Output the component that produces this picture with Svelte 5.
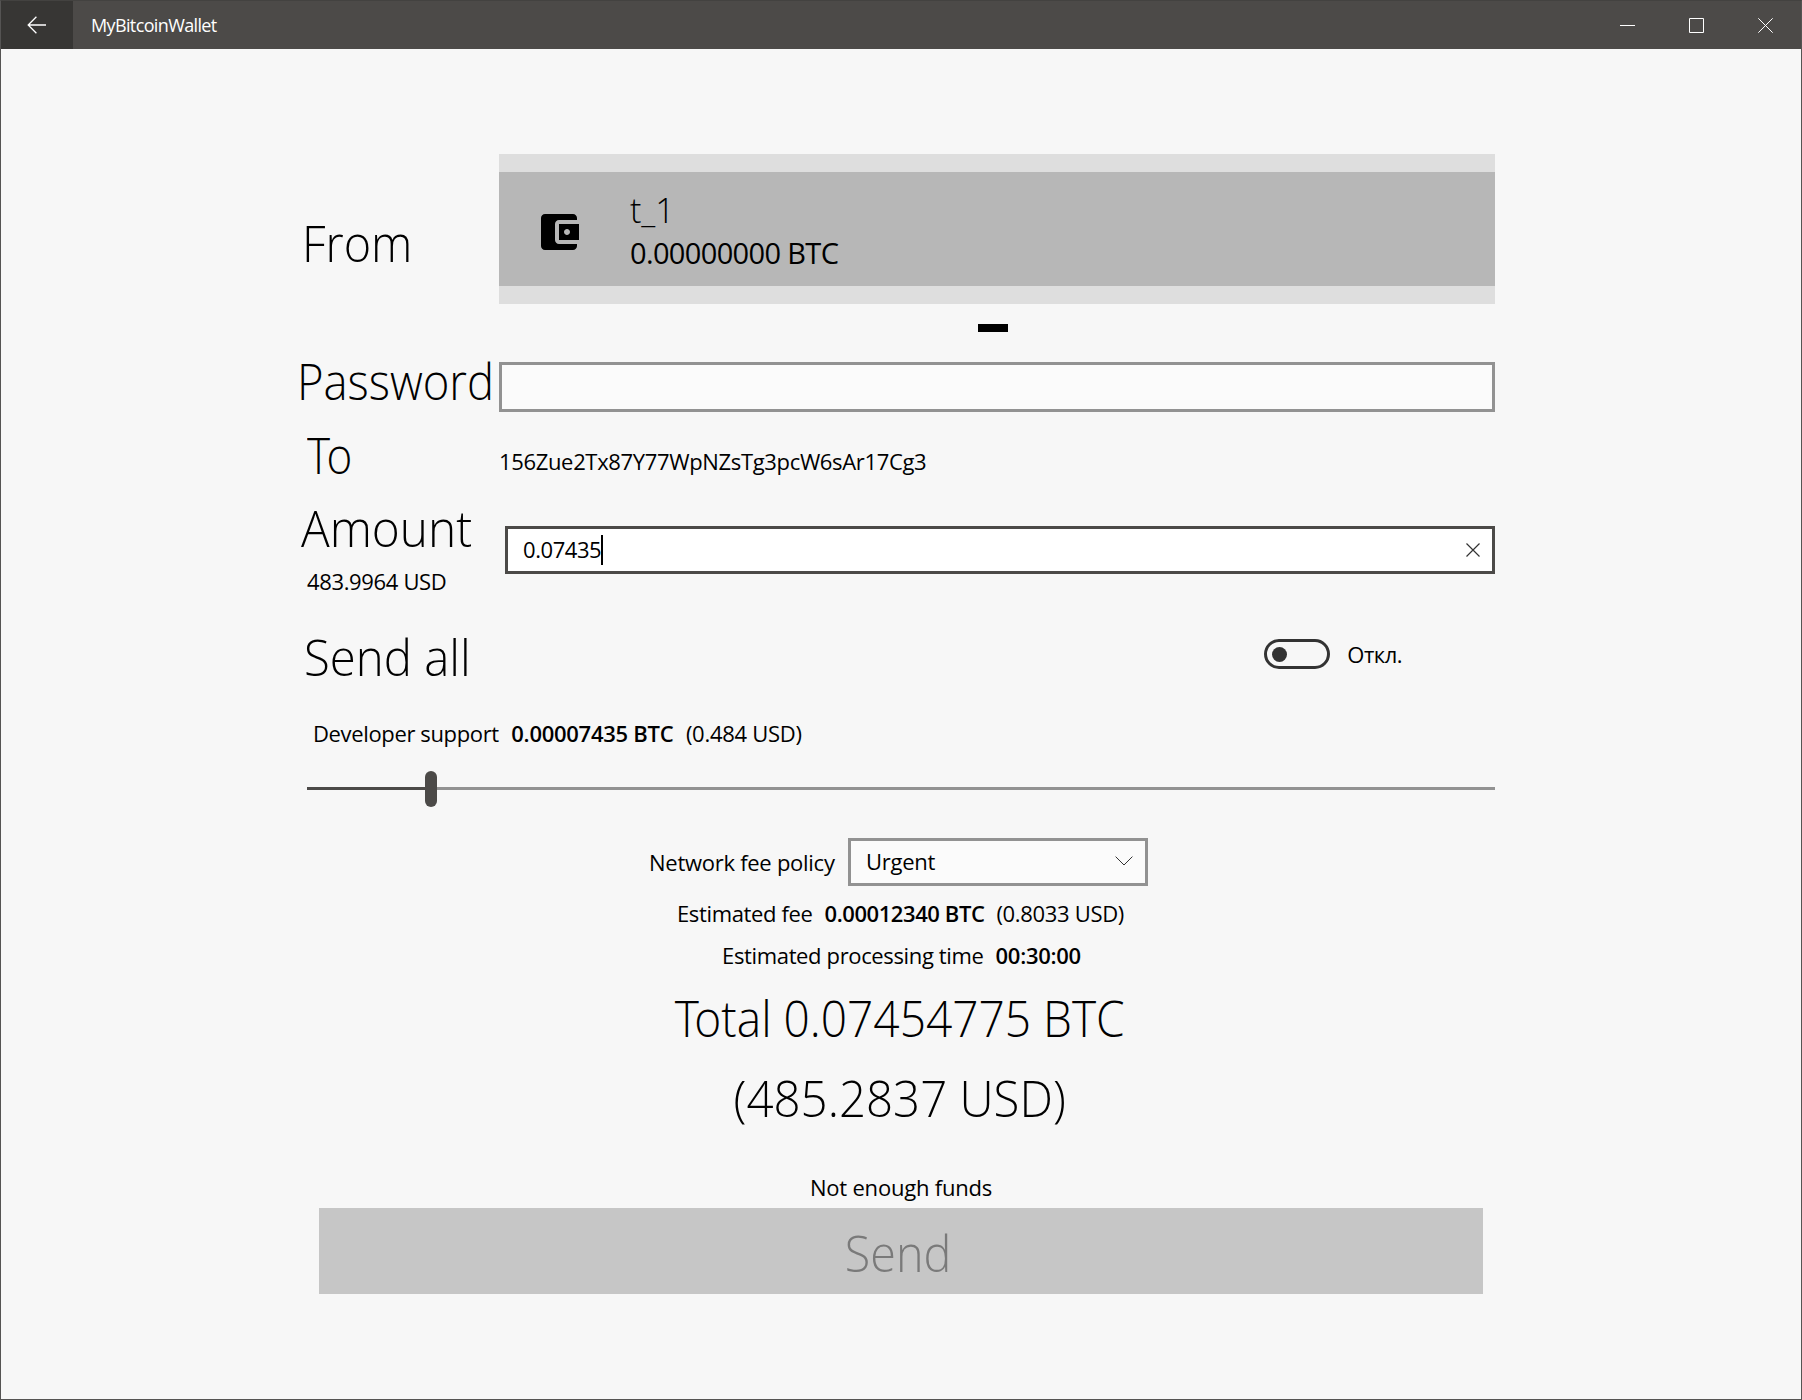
<script>
  const wallet = { name: 't_1', balance: '0.00000000 BTC' };
  let password = $state('');
  let amount = $state('0.07435');
  let sendAll = $state(false);
  let support = $state(10);
</script>

<div class="window">
  <header class="titlebar">
    <button class="back" aria-label="Back">
      <svg width="20" height="18" viewBox="0 0 20 18"><path d="M19 9H1.2M9.4 .7 1.2 9l8.2 8.3" /></svg>
    </button>
    <span class="title">MyBitcoinWallet</span>
    <div class="controls">
      <svg width="16" height="16" viewBox="0 0 16 16"><path d="M0 7.5H15" /></svg>
      <svg width="16" height="16" viewBox="0 0 16 16"><path d="M.5 .5H14.5V14.5H.5Z" /></svg>
      <svg width="16" height="16" viewBox="0 0 16 16"><path d="M.3 .3 14.7 14.7M14.7 .3 .3 14.7" /></svg>
    </div>
  </header>

  <main>
    <section class="row from">
      <div class="side"><span class="label l-from">From</span></div>
      <div class="field">
        <div class="flip">
          <div class="wallet">
            <svg class="icon" width="48" height="48" viewBox="0 0 24 24">
              <path d="M21 18v1c0 1.1-.9 2-2 2H5c-1.11 0-2-.9-2-2V5c0-1.1.89-2 2-2h14c1.1 0 2 .9 2 2v1h-9c-1.11 0-2 .9-2 2v8c0 1.1.89 2 2 2h9zm-9-2h10V8H12v8zm4-2.5c-.83 0-1.5-.67-1.5-1.5s.67-1.5 1.5-1.5 1.5.67 1.5 1.5-.67 1.5-1.5 1.5z" />
            </svg>
            <div class="info">
              <div class="name">{wallet.name}</div>
              <div class="balance">{wallet.balance}</div>
            </div>
          </div>
        </div>
        <div class="pip"></div>
      </div>
    </section>

    <section class="row password">
      <div class="side"><span class="label l-password">Password</span></div>
      <div class="field box">{password}</div>
    </section>

    <section class="row to">
      <div class="side"><span class="label l-to">To</span></div>
      <div class="field address">156Zue2Tx87Y77WpNZsTg3pcW6sAr17Cg3</div>
    </section>

    <section class="row amount">
      <div class="side">
        <span class="label l-amount">Amount</span>
        <span class="usd">483.9964 USD</span>
      </div>
      <div class="field box focused">
        <span class="value">{amount}</span><span class="caret"></span>
        <svg class="clear" width="14" height="14" viewBox="0 0 14 14"><path d="M.5 .5 13.5 13.5M13.5 .5 .5 13.5" /></svg>
      </div>
    </section>

    <section class="row all">
      <span class="label l-all">Send all</span>
      <div class="switch">
        <span class="track"><span class="knob" class:on={sendAll}></span></span>
        <span class="state">Откл.</span>
      </div>
    </section>

    <p class="dev">
      <span class="tight">Developer support</span>
      <strong>0.00007435 BTC</strong>
      <span>(0.484 USD)</span>
    </p>

    <div class="slider">
      <span class="filled" style="width:calc((100% - 12px) * {support / 100})"></span>
      <span class="thumb"></span>
      <span class="rest"></span>
    </div>

    <div class="policy">
      <span class="caption">Network fee policy</span>
      <div class="combo">
        <span>Urgent</span>
        <svg width="18" height="10" viewBox="0 0 18 10"><path d="M.6 .6 9 9 17.4 .6" /></svg>
      </div>
    </div>

    <p class="fee">
      <span class="tight">Estimated fee</span>
      <strong>0.00012340 BTC</strong>
      <span>(0.8033 USD)</span>
    </p>
    <p class="time">
      <span class="tight">Estimated processing time</span>
      <strong>00:30:00</strong>
    </p>

    <div class="total"><span class="t-btc"><i>T</i>otal 0.07454775 BTC</span></div>
    <div class="total"><span class="t-usd">(485.2837 USD)</span></div>

    <div class="warning">Not enough funds</div>
    <button class="send" disabled><span>Send</span></button>
  </main>
</div>

<style>
  :global(body) {
    margin: 0;
  }
  .window {
    box-sizing: border-box;
    width: 1802px;
    height: 1400px;
    border: 1px solid #555453;
    border-top-color: #434240;
    background: #f7f7f7;
    color: #000;
    font: 22px/30px 'Open Sans', 'Noto Sans', sans-serif;
    letter-spacing: -0.27px;
    overflow: hidden;
  }
  svg {
    display: block;
    flex: none;
    fill: none;
    stroke: #fff;
    stroke-width: 1;
  }
  p {
    margin: 0;
  }
  strong {
    font-weight: 600;
    letter-spacing: -0.27px;
  }

  .titlebar {
    display: flex;
    align-items: center;
    height: 48px;
    background: #4c4a48;
    color: #fff;
  }
  .back {
    display: grid;
    place-items: center;
    width: 72px;
    height: 48px;
    padding: 0;
    border: 0;
    background: #373634;
  }
  .back svg {
    stroke-width: 1.3;
  }
  .title {
    margin-left: 18px;
    font-size: 18px;
    letter-spacing: -0.63px;
  }
  .controls {
    display: flex;
    gap: 53px;
    margin-left: auto;
    padding: 1px 27px 0 0;
  }

  main {
    display: flex;
    flex-direction: column;
    width: 1195px;
    margin-left: 299px;
    padding-top: 105px;
  }
  .row {
    display: flex;
    flex: none;
  }
  .side {
    flex: none;
    width: 199px;
  }
  .field {
    flex: 1;
  }
  .label {
    display: block;
    width: max-content;
    font-size: 50px;
    font-weight: 300;
    line-height: 50px;
    letter-spacing: 0;
    white-space: nowrap;
    transform-origin: left;
  }

  .from {
    height: 208px;
  }
  .l-from {
    margin: 63.5px 0 0 2px;
    transform: scaleX(0.935);
  }
  .flip {
    box-sizing: border-box;
    height: 150px;
    padding: 18px 0;
    background: #dedede;
  }
  .wallet {
    display: flex;
    align-items: center;
    height: 114px;
    background: #b7b7b7;
  }
  .icon {
    margin: 6px 0 0 36px;
    fill: #000;
    stroke: none;
  }
  .info {
    margin: 5px 0 0 47px;
  }
  .name {
    font-size: 34px;
    font-weight: 300;
    line-height: 42px;
    letter-spacing: 0;
  }
  .balance {
    font-size: 29px;
    line-height: 43px;
    letter-spacing: -0.65px;
  }
  .pip {
    width: 30px;
    height: 8px;
    margin: 20px 0 0 479px;
    background: #000;
  }

  .password {
    height: 50px;
  }
  .l-password {
    margin: -6.5px 0 0 -3.5px;
    transform: scaleX(0.908);
  }
  .box {
    box-sizing: border-box;
    border: 3px solid #929292;
    background: #fbfbfb;
  }

  .to {
    height: 88px;
  }
  .l-to {
    margin: 17.5px 0 0 6.5px;
    letter-spacing: -4px;
    transform: scaleX(0.88);
  }
  .address {
    padding: 34px 0 0;
    letter-spacing: -0.34px;
  }

  .amount {
    height: 120px;
  }
  .l-amount {
    margin: 3px 0 0 1px;
    transform: scaleX(0.955);
  }
  .usd {
    display: block;
    margin: 13px 0 0 7px;
    letter-spacing: -0.35px;
  }
  .focused {
    display: flex;
    align-items: center;
    height: 48px;
    margin: 26px 0 0 6px;
    padding: 0 12px 0 15px;
    border-color: #4c4a48;
    background: #fff;
  }
  .value {
    margin-top: -2px;
    letter-spacing: -0.43px;
  }
  .caret {
    width: 2px;
    height: 30px;
    background: #000;
  }
  .clear {
    margin-left: auto;
    stroke: #333;
    stroke-width: 1.2;
  }

  .all {
    height: 98px;
  }
  .l-all {
    margin: 11.5px 0 0 4px;
    transform: scaleX(0.947);
  }
  .switch {
    display: flex;
    align-items: center;
    height: 30px;
    margin: 19px 93px 0 auto;
  }
  .track {
    box-sizing: border-box;
    display: flex;
    align-items: center;
    width: 66px;
    height: 30px;
    padding-left: 5px;
    border: 3px solid #333;
    border-radius: 15px;
  }
  .knob {
    width: 15px;
    height: 15px;
    border-radius: 50%;
    background: #333;
  }
  .knob.on {
    margin-left: 36px;
  }
  .state {
    margin-left: 17.5px;
    letter-spacing: -0.5px;
  }

  .dev {
    display: flex;
    gap: 12.5px;
    height: 53px;
    margin-left: 13px;
  }
  .tight {
    letter-spacing: -0.36px;
  }

  .slider {
    display: flex;
    align-items: center;
    width: 1188px;
    height: 36px;
    margin-left: 7px;
  }
  .filled {
    flex: none;
    height: 3px;
    margin-bottom: 1px;
    background: #4c4a48;
  }
  .thumb {
    flex: none;
    width: 12px;
    height: 36px;
    border-radius: 6px;
    background: #4c4a48;
  }
  .rest {
    flex: 1;
    height: 3px;
    margin-bottom: 1px;
    background: #929292;
  }

  .policy {
    display: flex;
    align-items: center;
    height: 48px;
    margin: 31px 0 0 349px;
  }
  .caption {
    width: 199px;
  }
  .combo {
    box-sizing: border-box;
    display: flex;
    align-items: center;
    justify-content: space-between;
    width: 300px;
    height: 48px;
    padding: 0 12px 2px 15px;
    border: 3px solid #929292;
    background: #fbfbfb;
  }
  .combo svg {
    stroke: #333;
  }
  .fee,
  .time {
    display: flex;
    justify-content: center;
    gap: 12px;
    width: 1203px;
    margin-top: 12px;
  }
  .fee {
    width: 1201px;
    letter-spacing: -0.32px;
  }
  .fee strong {
    letter-spacing: -0.42px;
  }
  .total {
    width: 1202px;
    height: 80px;
    font-size: 50px;
    font-weight: 300;
    line-height: 80px;
    letter-spacing: 0;
    text-align: center;
  }
  .time + .total {
    margin-top: 8px;
  }
  .total span {
    display: inline-block;
  }
  .t-btc {
    transform: translateX(-1.5px) scaleX(0.921);
  }
  .t-btc i {
    font-style: normal;
    letter-spacing: -5px;
  }
  .t-usd {
    transform: translateX(-1.5px) scaleX(0.948);
  }
  .warning {
    width: 1202px;
    margin-top: 34px;
    letter-spacing: -0.2px;
    text-align: center;
  }
  .send {
    width: 1164px;
    height: 86px;
    margin: 6px 0 0 19px;
    padding: 4px 0 0;
    border: 0;
    background: #c6c6c6;
    color: #7a7a7a;
    font: 300 50px/60px 'Open Sans', 'Noto Sans', sans-serif;
  }
  .send span {
    display: inline-block;
    transform: translateX(-3px) scaleX(0.935);
  }
</style>
